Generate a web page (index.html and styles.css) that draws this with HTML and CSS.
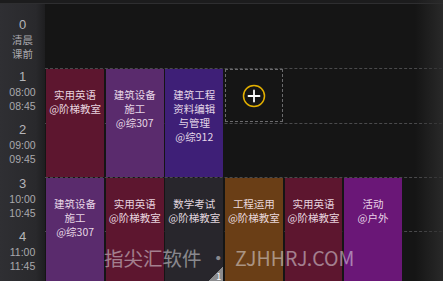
FILE: index.html
```html
<!DOCTYPE html>
<html lang="zh">
<head>
<meta charset="utf-8">
<link rel="stylesheet" href="styles.css">
</head>
<body>
<div class="app">
  <div class="topbar"></div>
  <div class="body">
    <div class="side">
      <div class="lab lab0"><div class="num">0</div><div class="t">清晨</div><div class="t">课前</div></div>
      <div class="lab lab1"><div class="num">1</div><div class="t">08:00</div><div class="t">08:45</div></div>
      <div class="lab"><div class="num">2</div><div class="t">09:00</div><div class="t">09:45</div></div>
      <div class="lab"><div class="num">3</div><div class="t">10:00</div><div class="t">10:45</div></div>
      <div class="lab"><div class="num">4</div><div class="t">11:00</div><div class="t">11:45</div></div>
    </div>
    <div class="grid">
      <div class="line l1"></div>
      <div class="line l2"></div>
      <div class="line l3"></div>
      <div class="line l4"></div>

      <div class="cell c1 rA maroon">实用英语<br>@阶梯教室</div>
      <div class="cell c2 rA purple">建筑设备<br>施工<br>@综307</div>
      <div class="cell c3 rA indigo">建筑工程<br>资料编辑<br>与管理<br>@综912</div>
      <div class="add c4">
        <svg width="24" height="24" viewBox="0 0 24 24">
          <circle cx="12" cy="12" r="10.5" fill="none" stroke="#e3b000" stroke-width="1.5"/>
          <path d="M12 6.5v11M6.5 12h11" stroke="#ffffff" stroke-width="1.8" stroke-linecap="round"/>
        </svg>
      </div>

      <div class="cell c1 rB purple">建筑设备<br>施工<br>@综307</div>
      <div class="cell c2 rB maroon">实用英语<br>@阶梯教室</div>
      <div class="cell c3 rB dark">数学考试<br>@阶梯教室<span class="badge"><span class="badge-n">1</span></span></div>
      <div class="cell c4 rB brown">工程运用<br>@阶梯教室</div>
      <div class="cell c5 rB maroon">实用英语<br>@阶梯教室</div>
      <div class="cell c6 rB violet">活动<br>@户外</div>
    </div>
  </div>
  <div class="edge"></div>
  <div class="watermark">指尖汇软件<span class="dot">•</span>ZJHHRJ.COM</div>
</div>
</body>
</html>
```

FILE: styles.css
```css
html, body {
  margin: 0;
  padding: 0;
  background: #151515;
}
.app {
  position: relative;
  width: 443px;
  height: 281px;
  overflow: hidden;
  background: #151515;
  font-family: "Noto Sans CJK SC", "Noto Sans", sans-serif;
}
.topbar {
  height: 3px;
  background: #1c1c1d;
  border-bottom: 1px solid #2e2e30;
}
.body {
  display: flex;
}
.side {
  width: 45px;
  flex: none;
  background: linear-gradient(to right, #2f2f33 0%, #29292c 80%, #1e1e20 100%);
  display: flex;
  flex-direction: column;
  height: 277px;
}
.lab {
  height: 54px;
  padding-top: 1px;
  box-sizing: border-box;
  display: flex;
  flex-direction: column;
  align-items: center;
  color: #a9a9ad;
  font-family: "Liberation Sans", "Noto Sans CJK SC", sans-serif;
}
.lab0 { height: 64px; padding-top: 13px; }
.lab1 { height: 55px; padding-top: 2px; }
.num {
  font-size: 13px;
  line-height: 16px;
  color: #b5b5b9;
}
.t {
  font-size: 10.5px;
  line-height: 14px;
}
.grid {
  display: grid;
  grid-template-columns: repeat(7, 59.6px);
  grid-template-rows: 64px 55px 54px 54px 54px;
  flex: none;
}
.line {
  grid-column: 1 / -1;
  border-top: 1px dashed #4a4a4c;
}
.l1 { grid-row: 2; }
.l2 { grid-row: 3; }
.l3 { grid-row: 4; }
.l4 { grid-row: 5; }
.c1 { grid-column: 1; }
.c2 { grid-column: 2; }
.c3 { grid-column: 3; }
.c4 { grid-column: 4; }
.c5 { grid-column: 5; }
.c6 { grid-column: 6; }
.rA { grid-row: 2 / span 2; }
.rB { grid-row: 4 / span 2; }
.cell {
  position: relative;
  margin: 1px 0.6px 0 1.2px;
  padding-top: 19px;
  text-align: center;
  font-size: 10.5px;
  line-height: 14px;
  color: rgba(255, 240, 250, 0.88);
}
.maroon { background: #5d162f; }
.purple { background: #5a2b6d; }
.indigo { background: #3e1f77; }
.dark { background: #28262c; }
.brown { background: #6a3e16; }
.violet { background: #6a1777; }
.add {
  grid-row: 2;
  margin: 1px 0 1px 1px;
  border: 1px dashed #6a6a6c;
  display: flex;
  align-items: center;
  justify-content: center;
}
.badge {
  position: absolute;
  right: 0;
  bottom: 3px;
  width: 16px;
  height: 16px;
  background: linear-gradient(to top left, #8c8c8e 50%, transparent 50%);
}
.badge-n {
  position: absolute;
  right: 2px;
  bottom: 0;
  font-size: 9px;
  line-height: 10px;
  color: #ffffff;
}
.edge {
  position: absolute;
  top: 0;
  right: 0;
  width: 28px;
  height: 281px;
  background: linear-gradient(to right, rgba(40, 40, 40, 0), rgba(44, 44, 44, 0.85));
  pointer-events: none;
}
.watermark {
  position: absolute;
  left: 104px;
  top: 248px;
  font-size: 19.5px;
  line-height: 20px;
  color: rgba(235, 235, 240, 0.5);
  white-space: nowrap;
}
.dot {
  margin: 0 7px;
}
```
